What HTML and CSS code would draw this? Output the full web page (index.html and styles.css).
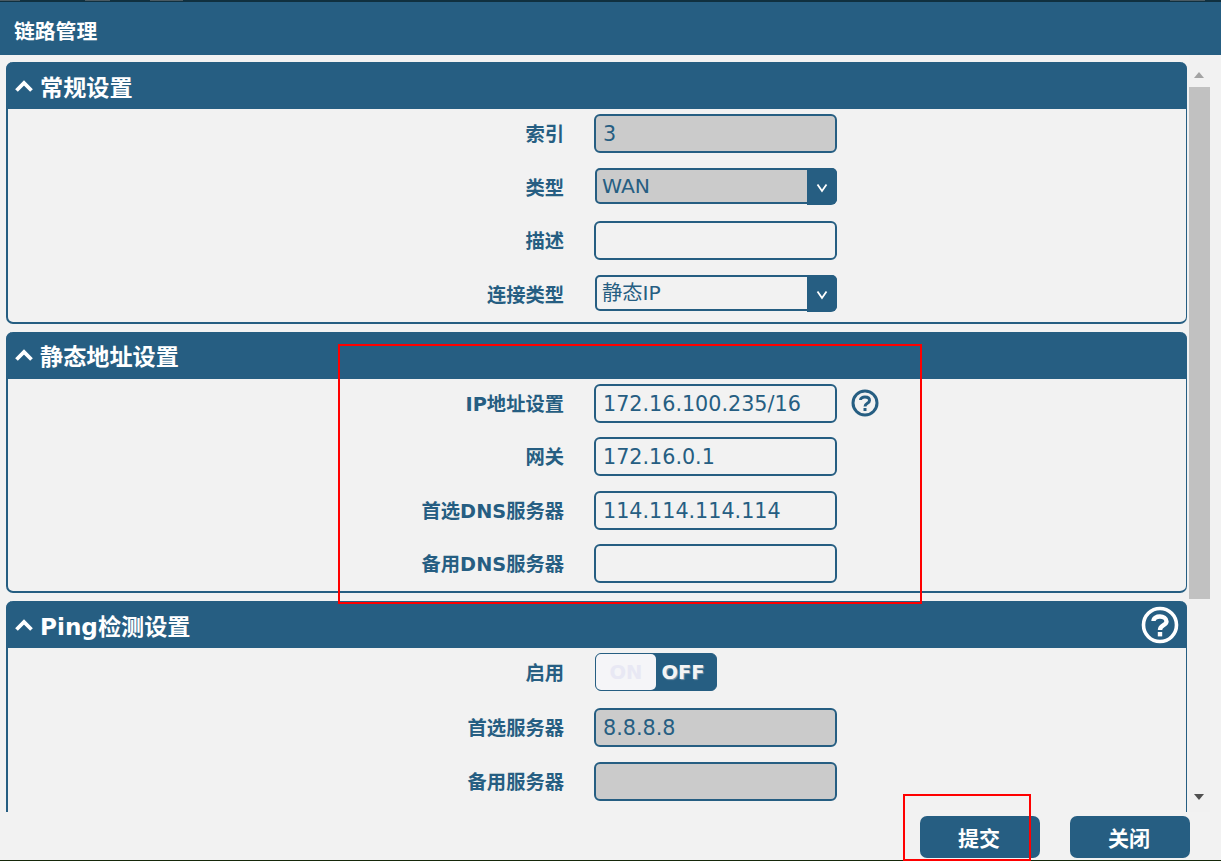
FILE: index.html
```html
<!DOCTYPE html>
<html lang="zh-CN">
<head>
<meta charset="utf-8">
<title>链路管理</title>
<link rel="stylesheet" href="styles.css">
</head>
<body>
<div class="modal">
  <div class="topstrip"></div>
  <header class="titlebar">链路管理</header>
  <div class="middle">
    <div class="pane">
      <section class="card">
        <h2 class="card-head"><svg class="chev" viewBox="0 0 18 12"><path d="M1.500 10.500 L9 3 L16.500 10.500" fill="none" stroke="#fff" stroke-width="3.800"/></svg><span>常规设置</span></h2>
        <div class="card-body">
          <div class="row"><label class="lbl">索引</label><div class="field off">3</div></div>
          <div class="row"><label class="lbl">类型</label><div class="select off"><span class="select-val">WAN</span><span class="select-btn"><svg viewBox="0 0 12 10" class="vee"><path d="M1.5 1.5 L6 8 L10.500 1.500" fill="none" stroke="#fff" stroke-width="1.800"/></svg></span></div></div>
          <div class="row"><label class="lbl">描述</label><div class="field"></div></div>
          <div class="row"><label class="lbl">连接类型</label><div class="select"><span class="select-val">静态IP</span><span class="select-btn"><svg viewBox="0 0 12 10" class="vee"><path d="M1.5 1.5 L6 8 L10.500 1.500" fill="none" stroke="#fff" stroke-width="1.800"/></svg></span></div></div>
        </div>
      </section>
      <section class="card">
        <h2 class="card-head"><svg class="chev" viewBox="0 0 18 12"><path d="M1.500 10.500 L9 3 L16.500 10.500" fill="none" stroke="#fff" stroke-width="3.800"/></svg><span>静态地址设置</span></h2>
        <div class="card-body">
          <div class="row"><label class="lbl">IP地址设置</label><div class="field">172.16.100.235/16</div><svg class="help" viewBox="0 0 28 28"><circle cx="14" cy="14" r="12" fill="none" stroke="#265e82" stroke-width="3"/><path d="M9.500 11 C9.500 7 18.500 7 18.500 11.500 C18.500 14.500 14 14 14 17.500" fill="none" stroke="#265e82" stroke-width="3"/><rect x="12.500" y="19" width="3" height="3" fill="#265e82"/></svg></div>
          <div class="row"><label class="lbl">网关</label><div class="field">172.16.0.1</div></div>
          <div class="row"><label class="lbl">首选DNS服务器</label><div class="field">114.114.114.114</div></div>
          <div class="row"><label class="lbl">备用DNS服务器</label><div class="field"></div></div>
        </div>
      </section>
      <section class="card">
        <h2 class="card-head"><svg class="chev" viewBox="0 0 18 12"><path d="M1.500 10.500 L9 3 L16.500 10.500" fill="none" stroke="#fff" stroke-width="3.800"/></svg><span>Ping检测设置</span><svg class="help-head" viewBox="0 0 38 38"><circle cx="19" cy="19" r="16.500" fill="none" stroke="#fff" stroke-width="3.600"/><path d="M12.500 15 C12.500 9 25.500 9 25.500 15.500 C25.500 19.500 19 19 19 24" fill="none" stroke="#fff" stroke-width="4.400"/><rect x="16.800" y="26" width="4.400" height="4.400" fill="#fff"/></svg></h2>
        <div class="card-body">
          <div class="row row-toggle"><label class="lbl">启用</label><div class="toggle"><span class="toggle-on">ON</span><span class="toggle-off">OFF</span></div></div>
          <div class="row"><label class="lbl">首选服务器</label><div class="field off">8.8.8.8</div></div>
          <div class="row"><label class="lbl">备用服务器</label><div class="field off"></div></div>
        </div>
      </section>
    </div>
    <div class="scrollbar">
      <span class="arrow-up"></span>
      <span class="thumb"></span>
      <span class="arrow-down"></span>
    </div>
  </div>
  <footer class="foot">
    <button class="btn">提交</button>
    <button class="btn">关闭</button>
  </footer>
  <div class="bottomstrip"></div>
  <div class="mark mark-a"></div>
  <div class="mark mark-b"></div>
</div>
</body>
</html>
```

FILE: styles.css
```css
* { box-sizing: border-box; }
html, body { margin: 0; padding: 0; }
body { width: 1221px; height: 861px; overflow: hidden; background: #f2f2f2; font-family: "DejaVu Sans", "Noto Sans CJK SC", sans-serif; color: #265e82; }
.modal { position: relative; width: 1221px; height: 861px; display: flex; flex-direction: column; }
.topstrip { height: 2px; background: #10303f linear-gradient(90deg, #4a5a62 0 20px, #10303f 20px 85px, #4a5a62 85px 110px, #10303f 110px 150px, #4a5a62 150px 183px, #10303f 183px 1170px, #4a5a62 1170px 1205px, #10303f 1205px) no-repeat 0 0 / 100% 1px; }
.titlebar { height: 53px; background: #265e82; color: #fff; font-size: 20.800px; font-weight: 700; line-height: 61px; padding-left: 14px; }
.middle { height: 757px; display: flex; overflow: hidden; }
.pane { width: 1189px; padding: 7px 2px 0 6px; overflow: hidden; }
.card { height: 261.500px; margin-bottom: 8px; border: 2px solid #265e82; border-top: 0; border-right-width: 1px; border-radius: 7px; }
.card-head { height: 47px; margin: 0 -1px 0 -2px; background: #265e82; color: #fff; border-radius: 7px 7px 0 0; font-size: 23.150px; font-weight: 700; display: flex; align-items: center; padding-left: 9px; position: relative; }
.chev { width: 18px; height: 12px; margin-right: 7px; }
.help-head { position: absolute; right: 8px; top: 5px; width: 38px; height: 38px; }
.card-body { padding-top: 5px; }
.row { height: 53.600px; display: flex; align-items: flex-start; }
.lbl { width: 556px; text-align: right; font-size: 19.300px; font-weight: 700; line-height: 41px; }
.field { width: 243px; height: 39px; margin-left: 30px; border: 2px solid #265e82; border-radius: 6px; background: #f2f2f2; font-size: 20.700px; line-height: 36px; padding-left: 7px; }
.field.off { background: #cbcbcb; }
.select { width: 242px; height: 36px; margin-left: 31px; border: 2px solid #265e82; border-radius: 5px; background: #f2f2f2; display: flex; font-size: 20.300px; line-height: 33px; position: relative; }
.select.off { background: #cbcbcb; }
.select-val { flex: 1; padding-left: 5px; }
.select-btn { width: 30px; margin: -2px -2px -3px 0; padding-top: 3px; background: #265e82; border-radius: 0 6px 6px 0; display: flex; align-items: center; justify-content: center; }
.vee { width: 12px; height: 10px; }
.help { width: 28px; height: 28px; margin: 5px 0 0 14px; }
.row-toggle { height: 55px; padding-top: 0; }
.toggle { width: 122px; height: 38px; margin-left: 31px; display: flex; border: 1px solid #265e82; border-radius: 6px; background: #265e82; font-size: 19.500px; font-weight: 700; line-height: 37px; }
.toggle-on { width: 60px; background: #f5f5f8; border-radius: 5px; color: #e8e8f4; text-align: center; }
.toggle-off { flex: 1; color: #f4f4f4; text-align: center; padding-right: 6px; text-shadow: 1px 1px 1px rgba(180, 190, 200, 0.6); }
.scrollbar { width: 21px; position: relative; background: #f1f1f1; display: flex; flex-direction: column; align-items: center; }
.thumb { position: absolute; left: 0; top: 32px; width: 21px; height: 512px; background: #c1c1c1; }
.arrow-up { position: absolute; top: 17px; left: 5px; border: 5.500px solid transparent; border-top: 0; border-bottom: 6px solid #a3a3a3; }
.arrow-down { position: absolute; top: 739px; left: 5px; border: 5.500px solid transparent; border-bottom: 0; border-top: 6px solid #505050; }
.foot { height: 48px; display: flex; gap: 30px; justify-content: flex-end; padding: 4px 31px 0 0; }
.btn { width: 120px; height: 42px; border: 0; border-radius: 7px; background: #265e82; color: #fff; font: 700 21px "DejaVu Sans", "Noto Sans CJK SC", sans-serif; padding: 0 2px 0 0; }
.bottomstrip { height: 1px; background: #16280a; }
.mark { position: absolute; border: 2px solid #f00; pointer-events: none; }
.mark-a { left: 338px; top: 344px; width: 584px; height: 260px; }
.mark-b { left: 903px; top: 794px; width: 128px; height: 67px; }
```
